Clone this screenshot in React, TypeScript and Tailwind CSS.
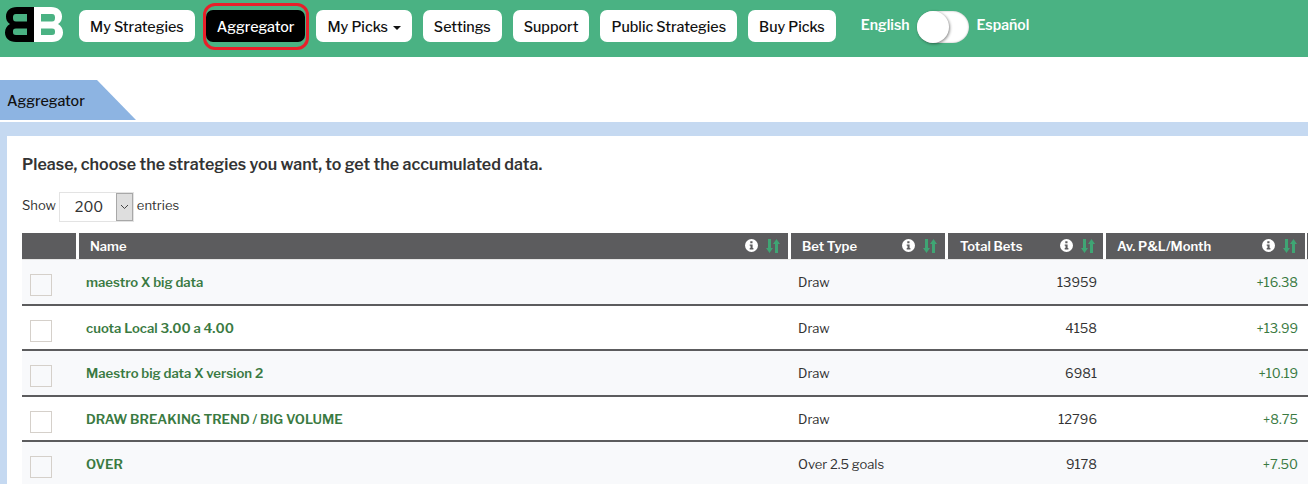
const NAV = ['My Strategies', 'Aggregator', 'My Picks', 'Settings', 'Support', 'Public Strategies', 'Buy Picks']

const COLS = [
  { name: 'Name', w: 'w-[709px]', pad: 'pl-[11px]' },
  { name: 'Bet Type', w: 'w-[154px]', pad: 'pl-[11px]' },
  { name: 'Total Bets', w: 'w-[155px]', pad: 'pl-[12px]' },
  { name: 'Av. P&L/Month', w: 'w-[199px]', pad: 'pl-[11px]' },
]

const ROWS = [
  { name: 'maestro X big data', type: 'Draw', bets: '13959', pl: '+16.38' },
  { name: 'cuota Local 3.00 a 4.00', type: 'Draw', bets: '4158', pl: '+13.99' },
  { name: 'Maestro big data X version 2', type: 'Draw', bets: '6981', pl: '+10.19' },
  { name: 'DRAW BREAKING TREND / BIG VOLUME', type: 'Draw', bets: '12796', pl: '+8.75' },
  { name: 'OVER', type: 'Over 2.5 goals', bets: '9178', pl: '+7.50' },
]

function Logo() {
  return (
    <svg width="58" height="35" viewBox="0 0 58 35" className="shrink-0">
      <path fillRule="evenodd" fill="#000" d="M29 0H12C5 0 1 4 1 9.500c0 3 1 5.500 4 7.500-3 2-5 4.500-5 8.500C0 31 4 35 11 35h18V0ZM22 7v7.500H11c-2.500 0-3-1.500-3-3.700S8.500 7 11 7h11Zm0 14.500V28H11c-2.500 0-3-1-3-3.200s.5-3.300 3-3.300h11Z" />
      <path fillRule="evenodd" fill="#fff" d="M29 0h17c7 0 11 4 11 9.500 0 3-1 5.500-4 7.500 3 2 5 4.500 5 8.500C58 31 54 35 47 35H29V0Zm7 7v7.500h11c2.500 0 3-1.500 3-3.700S49.500 7 47 7H36Zm0 14.500V28h11c2.500 0 3-1 3-3.200s-.5-3.300-3-3.300H36Z" />
    </svg>
  )
}

function InfoIcon() {
  return (
    <svg width="13" height="13" viewBox="0 0 13 13" className="-mt-[2px]">
      <circle cx="6.500" cy="6.500" r="6.500" fill="#fff" />
      <path fill="#5c5c5e" d="M5.300 2.300h2.200v2H5.300zM4.700 5.400h2.900v3.600h.8v1.400H4.700V9h.8V6.800h-.8z" />
    </svg>
  )
}

function SortIcon() {
  return (
    <svg width="14" height="14" viewBox="0 0 14 14" fill="#3fa574">
      <path d="M2 0h3v9h2l-3.500 5L0 9h2V0Z" />
      <path d="M9 14h3V5h2L10.500 0 7 5h2v9Z" />
    </svg>
  )
}

export default function App() {
  return (
    <div className="h-[484px] w-[1308px] overflow-hidden bg-white [font-family:'Libre_Franklin','Inter','Liberation_Sans',sans-serif] text-[#333]">
      <nav className="flex h-[57px] bg-[#4ab283] pl-[5px]">
        <div className="mt-[7px] mr-[16px]">
          <Logo />
        </div>
        <div className="mt-[10px] flex h-[32px] gap-[11px]">
          {NAV.map((n) => (
            <div key={n} className="relative">
              <button className={`flex h-[32px] items-center rounded-[7px] px-[11px] pt-[3px] text-[14.3px] font-[550] ${n === 'Aggregator' ? 'bg-black text-white' : 'bg-white text-[#111]'}`}>
                {n}
                {n === 'My Picks' && <span className="ml-[5px] mt-[1px] border-x-[4px] border-t-[4px] border-x-transparent border-t-[#111]" />}
              </button>
              {n === 'Aggregator' && <div className="absolute -top-[7px] -left-[3px] -right-[4px] h-[47px] rounded-[12px] border-[3px] border-[#e8202a]" />}
            </div>
          ))}
        </div>
        <div className="ml-[25px] mt-[11px] flex h-[32px] items-center gap-[7px] text-[14px] font-semibold text-white">
          <span className="-mt-[5px]">English</span>
          <div className="relative h-[32px] w-[52px] rounded-full bg-white shadow-[inset_0_0_2px_rgba(0,0,0,0.35)]">
            <div className="absolute top-0 left-0 h-[32px] w-[32px] rounded-full bg-white shadow-[1px_1px_3px_rgba(0,0,0,0.45)]" />
          </div>
          <span className="-mt-[5px] ml-[1px]">Español</span>
        </div>
      </nav>

      <div className="mt-[23px] flex h-[40px] items-center bg-[#8db4e2] pl-[7px] pt-[3px] pr-[50px] w-[136px] [clip-path:polygon(0_0,97px_0,100%_100%,0_100%)] text-[14.3px] font-[550] text-[#111]">
        Aggregator
      </div>

      <div className="mt-[2px] h-[400px] bg-[#c5d9f1] pl-[7px] pt-[14px]">
        <div className="h-full bg-white pl-[15px] pt-[18px]">
          <h2 className="text-[16px] leading-[20px] tracking-[0.03px] font-semibold text-[#333] pt-px">Please, choose the strategies you want, to get the accumulated data.</h2>
          <div className="mt-[17px] flex items-center gap-[3px] text-[13px] text-[#333]">
            <span className="-mt-[2px]">Show</span>
            <div className="flex h-[30px] w-[75px] items-center border border-[#e3e3e3] pl-[15px] pt-[2px] text-[14.4px]">
              <span className="flex-1">200</span>
              <span className="-mt-[2px] flex h-[28px] w-[17px] items-center justify-center border border-[#a8a8a8] bg-[#dedede]">
                <svg width="9" height="6" viewBox="0 0 9 6" fill="none" stroke="#444"><path d="M1 1l3.500 3.500L8 1" /></svg>
              </span>
            </div>
            <span className="-mt-[2px]">entries</span>
          </div>

          <div className="mt-[11px] w-[1300px]">
            <div className="flex h-[27px] gap-[3px] border-b border-[#e6e6e6]">
              <div className="w-[54px] bg-[#5c5c5e]" />
              {COLS.map((c) => (
                <div key={c.name} className={`flex items-center justify-between bg-[#5c5c5e] pr-[8px] ${c.w} ${c.pad} text-[13px] font-semibold text-white`}>
                  <span className="pt-[2px]">{c.name}</span>
                  <span className="flex items-center gap-[8px]">
                    <InfoIcon />
                    <SortIcon />
                  </span>
                </div>
              ))}
              <div className="w-[2px] -ml-px bg-[#5c5c5e]" />
            </div>
            {ROWS.map((r, i) => (
              <div key={r.name} className={`flex items-center border-b-2 border-[#5c5c5e] text-[13px] ${i % 2 === 0 ? 'h-[46px] bg-[#f8f9fb]' : 'h-[45px] bg-white'}`}>
                <div className="w-[64px] pl-[8px]">
                  <div className="mt-[6px] h-[22px] w-[22px] border border-[#d5d0ca]" />
                </div>
                <div className={`w-[712px] text-[13.15px] font-semibold text-[#3a7a42] ${i % 2 === 0 ? 'pt-px' : 'pt-[3px]'}`}>{r.name}</div>
                <div className="w-[200px] pt-[2px] text-[#333]">{r.type}</div>
                <div className="w-[99px] pt-[2px] text-right text-[#333]">{r.bets}</div>
                <div className="w-[201px] pt-[2px] text-right text-[#3a7a42]">{r.pl}</div>
              </div>
            ))}
          </div>
        </div>
      </div>
    </div>
  )
}
